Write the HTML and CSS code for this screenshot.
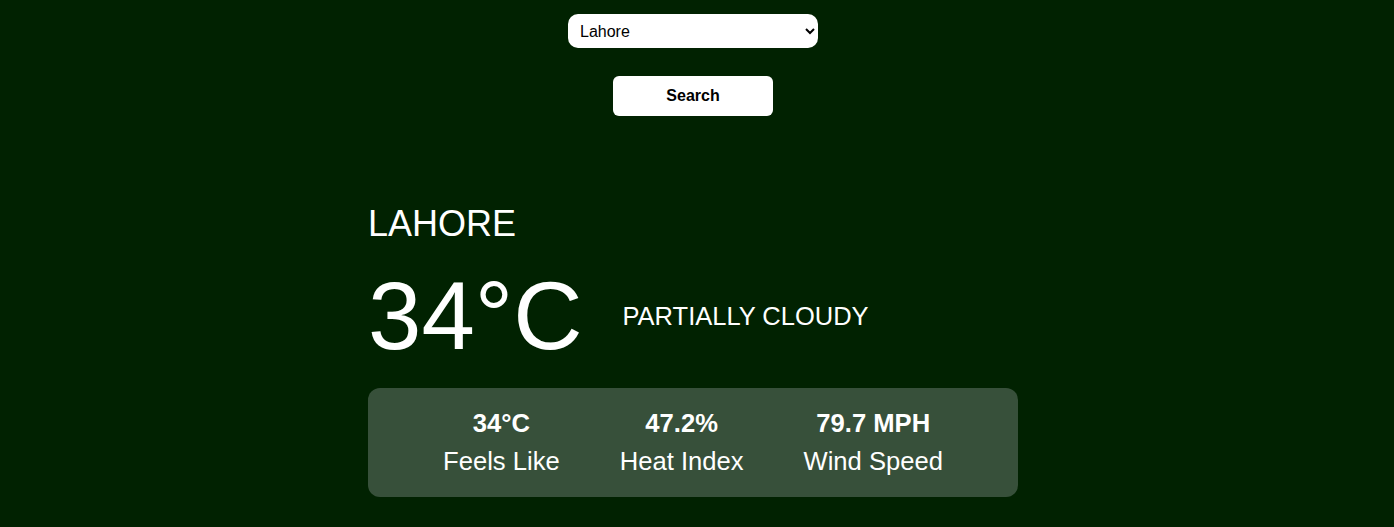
FILE: index.html
```html
<!DOCTYPE html>
<html lang="en">
<head>
<meta charset="utf-8">
<title>Weather</title>
<link rel="stylesheet" href="styles.css">
</head>
<body>
<div class="page">
  <form class="search-form">
    <select class="city-select">
      <option>Lahore</option>
      <option>Karachi</option>
      <option>Islamabad</option>
    </select>
    <button type="button" class="search-btn">Search</button>
  </form>
  <main class="weather">
    <h1 class="city">LAHORE</h1>
    <div class="temp-row">
      <div class="temp">34°C</div>
      <div class="condition">PARTIALLY CLOUDY</div>
    </div>
    <div class="card">
      <div class="stat"><div class="stat-value">34°C</div><div class="stat-label">Feels Like</div></div>
      <div class="stat"><div class="stat-value">47.2%</div><div class="stat-label">Heat Index</div></div>
      <div class="stat"><div class="stat-value">79.7 MPH</div><div class="stat-label">Wind Speed</div></div>
    </div>
  </main>
</div>
</body>
</html>
```
FILE: styles.css
```css
html, body {
  margin: 0;
  padding: 0;
}
body {
  background: #012201;
  color: #ffffff;
  font-family: "Liberation Sans", Arial, sans-serif;
  min-height: 100vh;
}
.page {
  padding: 14px 8px 0 0;
  display: flex;
  flex-direction: column;
  align-items: center;
}
.search-form {
  display: flex;
  flex-direction: column;
  align-items: center;
  gap: 28px;
}
.city-select {
  width: 250px;
  height: 34px;
  border: none;
  border-radius: 10px;
  background: #ffffff;
  color: #000000;
  font-family: "Liberation Sans", Arial, sans-serif;
  font-size: 16px;
  padding: 0 6px 0 8px;
}
.search-btn {
  width: 160px;
  height: 40px;
  border: none;
  border-radius: 6px;
  background: #ffffff;
  color: #000000;
  font-family: "Liberation Sans", Arial, sans-serif;
  font-size: 16px;
  font-weight: bold;
}
.weather {
  width: 650px;
  margin-top: 87px;
}
.city {
  margin: 0;
  font-size: 36px;
  font-weight: normal;
  line-height: normal;
}
.temp-row {
  display: flex;
  align-items: center;
  gap: 40px;
  margin-top: 16px;
}
.temp {
  font-size: 96px;
  line-height: normal;
}
.condition {
  font-size: 25.5px;
}
.card {
  margin-top: 17px;
  background: #37503a;
  border-radius: 12px;
  padding: 16px 0 16px;
  display: flex;
  justify-content: center;
  gap: 60px;
}
.stat {
  text-align: center;
  font-size: 25.6px;
  line-height: 1.5;
}
.stat-value {
  font-weight: bold;
}
```
